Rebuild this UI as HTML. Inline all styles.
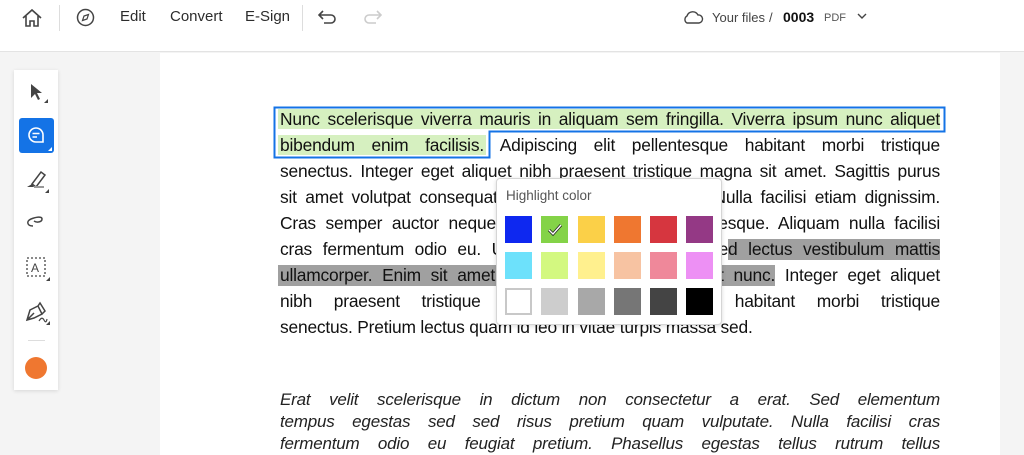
<!DOCTYPE html>
<html><head><meta charset="utf-8"><style>
*{margin:0;padding:0;box-sizing:border-box}
body{width:1024px;height:455px;overflow:hidden;background:#f4f4f4;font-family:"Liberation Sans",sans-serif;position:relative}
.top{position:absolute;left:0;top:0;width:1024px;height:52px;background:#fff;border-bottom:1px solid #e3e3e3}
.top .t{position:absolute;top:8px;font-size:15px;color:#2c2c2c}
.sep{position:absolute;top:5px;width:1px;height:26px;background:#ddd}
.page{position:absolute;left:160px;top:53px;width:840px;height:402px;background:#fff}
.ln{position:absolute;left:280px;width:660px;font-size:17.4px;color:#111;text-align:justify;text-align-last:justify;white-space:nowrap;line-height:20px;word-spacing:-3.5px;letter-spacing:-0.2px}
.ln.l{text-align-last:left;word-spacing:0}
.it{position:absolute;left:280px;width:660px;font-size:17px;font-style:italic;color:#222;text-align:justify;text-align-last:justify;line-height:20px;white-space:nowrap;word-spacing:-4px;letter-spacing:-0.2px}
.hl{position:absolute}
.tb{position:absolute;left:14px;top:70px;width:44px;height:320px;background:#fff;box-shadow:0 1px 4px rgba(0,0,0,.12)}
.pop{position:absolute;left:496px;top:178px;width:226px;height:147px;background:#fff;border:1px solid #d5d5d5;border-radius:4px;box-shadow:0 1px 4px rgba(0,0,0,.15)}
.sw{position:absolute;width:27px;height:27px}
</style></head><body>
<div class="top">
<svg style="position:absolute;left:21px;top:8px" width="22" height="20" viewBox="0 0 22 20" fill="none" stroke="#444" stroke-width="1.6"><path d="M2 10 L11 2 L20 10 M5 8 V18 H9 V13 H13 V18 H17 V8"/></svg>
<div class="sep" style="left:59px"></div>
<svg style="position:absolute;left:76px;top:8px" width="19" height="19" viewBox="0 0 19 19" fill="none" stroke="#444" stroke-width="1.5"><circle cx="9.5" cy="9.5" r="8"/><path d="M6.5 12.5 L8 8 L12.5 6.5 L11 11 Z" stroke-width="1.2"/></svg>
<div class="t" style="left:120px">Edit</div>
<div class="t" style="left:170px">Convert</div>
<div class="t" style="left:245px">E-Sign</div>
<div class="sep" style="left:302px"></div>
<svg style="position:absolute;left:318px;top:10px" width="20" height="14" viewBox="0 0 20 14" fill="none" stroke="#444" stroke-width="1.6"><path d="M5 1 L1 5 L5 9 M1 5 H13 A4 4 0 0 1 13 13 H6"/></svg>
<svg style="position:absolute;left:362px;top:10px" width="20" height="14" viewBox="0 0 20 14" fill="none" stroke="#ccc" stroke-width="1.6"><path d="M15 1 L19 5 L15 9 M19 5 H7 A4 4 0 0 0 7 13 H14"/></svg>
<svg style="position:absolute;left:682px;top:9px" width="22" height="16" viewBox="0 0 22 16" fill="none" stroke="#444" stroke-width="1.4"><path d="M5 14 A4 4 0 0 1 5 7 A6 6 0 0 1 16 6 A4 4 0 0 1 17 14 Z"/></svg>
<div class="t" style="left:712px;font-size:13px;top:10px;color:#444">Your files</div>
<div class="t" style="left:769px;font-size:13px;top:10px;color:#444">/</div>
<div class="t" style="left:783px;font-size:14px;top:9px;font-weight:bold;color:#111">0003</div>
<div class="t" style="left:824px;font-size:11px;top:12px;color:#555">PDF</div>
<svg style="position:absolute;left:857px;top:13px" width="10" height="7" viewBox="0 0 10 7" fill="none" stroke="#444" stroke-width="1.4"><path d="M1 1 L5 5 L9 1"/></svg>
</div>
<div class="page"></div>
<div style="position:absolute;left:1000px;top:53px;width:24px;height:402px;background:#f4f4f4"></div>

<div class="hl" style="left:278px;top:109px;width:662px;height:20px;background:#d6f0c0"></div>
<div class="hl" style="left:278px;top:135px;width:208px;height:20px;background:#d6f0c0"></div>
<svg style="position:absolute;left:273px;top:106px" width="674" height="54"><path d="M1.5 1.5 H671.5 V25.5 H216.5 V51.5 H1.5 Z" fill="none" stroke="#1473e6" stroke-width="2"/></svg>
<div class="hl" style="left:728px;top:239px;width:212px;height:21px;background:#a0a0a0"></div>
<div class="hl" style="left:278px;top:265px;width:497px;height:21px;background:#a0a0a0"></div>

<div class="ln" style="top:109px">Nunc scelerisque viverra mauris in aliquam sem fringilla. Viverra ipsum nunc aliquet</div>
<div class="ln" style="top:135px">bibendum enim facilisis. Adipiscing elit pellentesque habitant morbi tristique</div>
<div class="ln" style="top:161px">senectus. Integer eget aliquet nibh praesent tristique magna sit amet. Sagittis purus</div>
<div class="ln" style="top:187px">sit amet volutpat consequat mauris nunc congue nisi. Nulla facilisi etiam dignissim.</div>
<div class="ln" style="top:213px">Cras semper auctor neque vitae tempus quam pellentesque. Aliquam nulla facilisi</div>
<div class="ln" style="top:239px">cras fermentum odio eu. Ultricies mi quis hendrerit sed lectus vestibulum mattis</div>
<div class="ln" style="top:265px">ullamcorper. Enim sit amet venenatis urna cursus eget nunc. Integer eget aliquet</div>
<div class="ln" style="top:291px">nibh praesent tristique magna. Morbi senectus habitant morbi tristique</div>
<div class="ln l" style="top:317px">senectus. Pretium lectus quam id leo in vitae turpis massa sed.</div>

<div class="it" style="top:390px">Erat velit scelerisque in dictum non consectetur a erat. Sed elementum</div>
<div class="it" style="top:412px">tempus egestas sed sed risus pretium quam vulputate. Nulla facilisi cras</div>
<div class="it" style="top:434px">fermentum odio eu feugiat pretium. Phasellus egestas tellus rutrum tellus</div>

<div class="pop">
<div style="position:absolute;left:9px;top:9px;font-size:13.5px;color:#555">Highlight color</div>
<div class="sw" style="left:8px;top:37px;background:#0e28f0"></div>
<div class="sw" style="left:44px;top:37px;background:#84d348"><svg width="27" height="27"><path d="M8 14 L12 18 L20 9" fill="none" stroke="#222" stroke-width="3"/><path d="M8 14 L12 18 L20 9" fill="none" stroke="#fff" stroke-width="1.4"/></svg></div>
<div class="sw" style="left:81px;top:37px;background:#fbd048"></div>
<div class="sw" style="left:117px;top:37px;background:#ef7730"></div>
<div class="sw" style="left:153px;top:37px;background:#d6363f"></div>
<div class="sw" style="left:189px;top:37px;background:#943985"></div>
<div class="sw" style="left:8px;top:73px;background:#6de1fb"></div>
<div class="sw" style="left:44px;top:73px;background:#d3f880"></div>
<div class="sw" style="left:81px;top:73px;background:#fff08e"></div>
<div class="sw" style="left:117px;top:73px;background:#f7c3a2"></div>
<div class="sw" style="left:153px;top:73px;background:#ef889a"></div>
<div class="sw" style="left:189px;top:73px;background:#ed90f4"></div>
<div class="sw" style="left:8px;top:109px;background:#fff;border:2px solid #c8c8c8"></div>
<div class="sw" style="left:44px;top:109px;background:#cdcdcd"></div>
<div class="sw" style="left:81px;top:109px;background:#a8a8a8"></div>
<div class="sw" style="left:117px;top:109px;background:#767676"></div>
<div class="sw" style="left:153px;top:109px;background:#444"></div>
<div class="sw" style="left:189px;top:109px;background:#000"></div>
</div>

<div class="tb">
<svg style="position:absolute;left:14px;top:12px" width="22" height="24" viewBox="0 0 22 24"><path d="M3 2 L3 16 L7 12 L10 18 L12 17 L9 11 L14 11 Z" fill="#444"/><path d="M20 21 L20 17 L16 21 Z" fill="#444"/></svg>
<div style="position:absolute;left:5px;top:48px;width:35px;height:35px;background:#1473e6;border-radius:3px">
<svg width="35" height="35" viewBox="0 0 35 35"><path d="M17 10 A7 7 0 0 0 17 24 H24 V17 A7 7 0 0 0 17 10 Z" fill="none" stroke="#fff" stroke-width="1.6"/><path d="M13.5 15.5 H20.5 M13.5 19 H18" stroke="#fff" stroke-width="1.6"/><path d="M33 33 L33 29 L29 33 Z" fill="#fff"/></svg></div>
<svg style="position:absolute;left:10px;top:97px" width="28" height="28" viewBox="0 0 28 28"><path d="M8 17 L17 5 L21 8 L12 20 Z" fill="none" stroke="#444" stroke-width="1.5"/><path d="M3 20 L8 17 L10 20 Z" fill="#444"/><rect x="10" y="19" width="10" height="2" fill="#999"/><path d="M25 26 L25 22 L21 26 Z" fill="#444"/></svg>
<svg style="position:absolute;left:11px;top:142px" width="22" height="18" viewBox="0 0 22 18"><path d="M8 14 C2 14 1 9 6 7 C11 5 17 4 17 7 C17 10 12 11 9 9" fill="none" stroke="#444" stroke-width="1.5"/></svg>
<svg style="position:absolute;left:11px;top:186px" width="26" height="26" viewBox="0 0 26 26"><rect x="2" y="2" width="18" height="18" fill="none" stroke="#444" stroke-width="1.3" stroke-dasharray="2 2"/><text x="6" y="16" font-family="Liberation Sans" font-size="12" fill="#444">A</text><path d="M25 25 L25 21 L21 25 Z" fill="#444"/></svg>
<svg style="position:absolute;left:10px;top:230px" width="28" height="26" viewBox="0 0 28 26"><path d="M3 20 L6 10 L14 6 L18 14 L10 18 Z M3 20 L10 13 M14 6 L16 3 L21 11 L18 14" fill="none" stroke="#444" stroke-width="1.5"/><path d="M15 21 Q18 16 20 20 T23 19" fill="none" stroke="#444" stroke-width="1.2"/><path d="M26 25 L26 21 L22 25 Z" fill="#444"/></svg>
<div style="position:absolute;left:14px;top:270px;width:17px;height:1px;background:#ddd"></div>
<div style="position:absolute;left:11px;top:287px;width:22px;height:22px;border-radius:50%;background:#ef7730"></div>
</div>
</body></html>
